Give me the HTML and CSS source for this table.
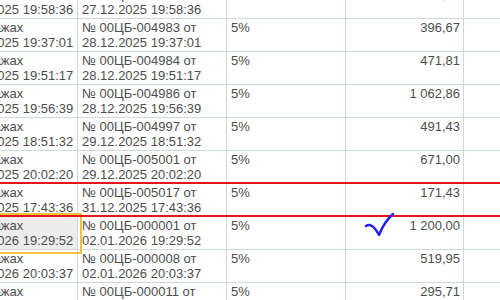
FILE: index.html
```html
<!DOCTYPE html>
<html lang="ru">
<head>
  <meta charset="UTF-8">
  <title>Отчеты о продажах</title>
  <link rel="stylesheet" href="styles.css">
</head>
<body>
  <div class="grid">
    <table class="docs">
      <colgroup>
        <col class="c-doc"><col class="c-base"><col class="c-rate"><col class="c-sum"><col class="c-rest">
      </colgroup>
      <tr>
        <td>о продажах<br>27.12.2025 19:58:36</td>
        <td>№ 00ЦБ-004981 от<br>27.12.2025 19:58:36</td>
        <td></td>
        <td class="num">345,12</td>
        <td></td>
      </tr>
      <tr>
        <td>о продажах<br>28.12.2025 19:37:01</td>
        <td>№ 00ЦБ-004983 от<br>28.12.2025 19:37:01</td>
        <td>5%</td>
        <td class="num">396,67</td>
        <td></td>
      </tr>
      <tr>
        <td>о продажах<br>28.12.2025 19:51:17</td>
        <td>№ 00ЦБ-004984 от<br>28.12.2025 19:51:17</td>
        <td>5%</td>
        <td class="num">471,81</td>
        <td></td>
      </tr>
      <tr>
        <td>о продажах<br>28.12.2025 19:56:39</td>
        <td>№ 00ЦБ-004986 от<br>28.12.2025 19:56:39</td>
        <td>5%</td>
        <td class="num">1 062,86</td>
        <td></td>
      </tr>
      <tr>
        <td>о продажах<br>29.12.2025 18:51:32</td>
        <td>№ 00ЦБ-004997 от<br>29.12.2025 18:51:32</td>
        <td>5%</td>
        <td class="num">491,43</td>
        <td></td>
      </tr>
      <tr>
        <td>о продажах<br>29.12.2025 20:02:20</td>
        <td>№ 00ЦБ-005001 от<br>29.12.2025 20:02:20</td>
        <td>5%</td>
        <td class="num">671,00</td>
        <td></td>
      </tr>
      <tr>
        <td>о продажах<br>31.12.2025 17:43:36</td>
        <td>№ 00ЦБ-005017 от<br>31.12.2025 17:43:36</td>
        <td>5%</td>
        <td class="num">171,43</td>
        <td></td>
      </tr>
      <tr>
        <td class="current">о продажах<br>02.01.2026 19:29:52</td>
        <td>№ 00ЦБ-000001 от<br>02.01.2026 19:29:52</td>
        <td>5%</td>
        <td class="num">1 200,00</td>
        <td></td>
      </tr>
      <tr>
        <td>о продажах<br>02.01.2026 20:03:37</td>
        <td>№ 00ЦБ-000008 от<br>02.01.2026 20:03:37</td>
        <td>5%</td>
        <td class="num">519,95</td>
        <td></td>
      </tr>
      <tr>
        <td>о продажах<br>03.01.2026 18:12:05</td>
        <td>№ 00ЦБ-000011 от<br>03.01.2026 18:12:05</td>
        <td>5%</td>
        <td class="num">295,71</td>
        <td></td>
      </tr>
    </table>

    <div class="mark-line line-top"></div>
    <div class="mark-line line-bottom"></div>
    <svg class="tick" width="34" height="28" viewBox="0 0 34 28">
      <path d="M2 14 Q8 10 15 23 Q20 10 29 2" fill="none" stroke="#2323e8" stroke-width="2.5" stroke-linecap="round" stroke-linejoin="round"/>
    </svg>
  </div>
</body>
</html>
```

FILE: styles.css
```css
*{margin:0;padding:0;box-sizing:border-box}
body{background:#fff;overflow:hidden;font-family:'Liberation Sans',Arial,sans-serif;color:#4d4d4d}
.grid{position:relative;width:500px;height:300px;overflow:hidden}
.docs{border-collapse:collapse;table-layout:fixed;width:614px;margin:-15px 0 0 -51px;font-size:13px;line-height:15px}
.c-doc{width:128px}
.c-base{width:149px}
.c-rate{width:119px}
.c-sum{width:118px}
.c-rest{width:100px}
.docs td{border:1px solid #cbdad5;padding:1px 4px;height:33px;vertical-align:top;white-space:nowrap;overflow:hidden}
.docs td.num{text-align:right;padding-right:3px}
.docs td.current{background:#ececec;outline:2px solid #f3c23b;outline-offset:2px}
.mark-line{position:absolute;left:0;right:0;height:2px;background:#e8141c}
.line-top{top:182px}
.line-bottom{top:215px}
.tick{position:absolute;left:364px;top:212px}
```
